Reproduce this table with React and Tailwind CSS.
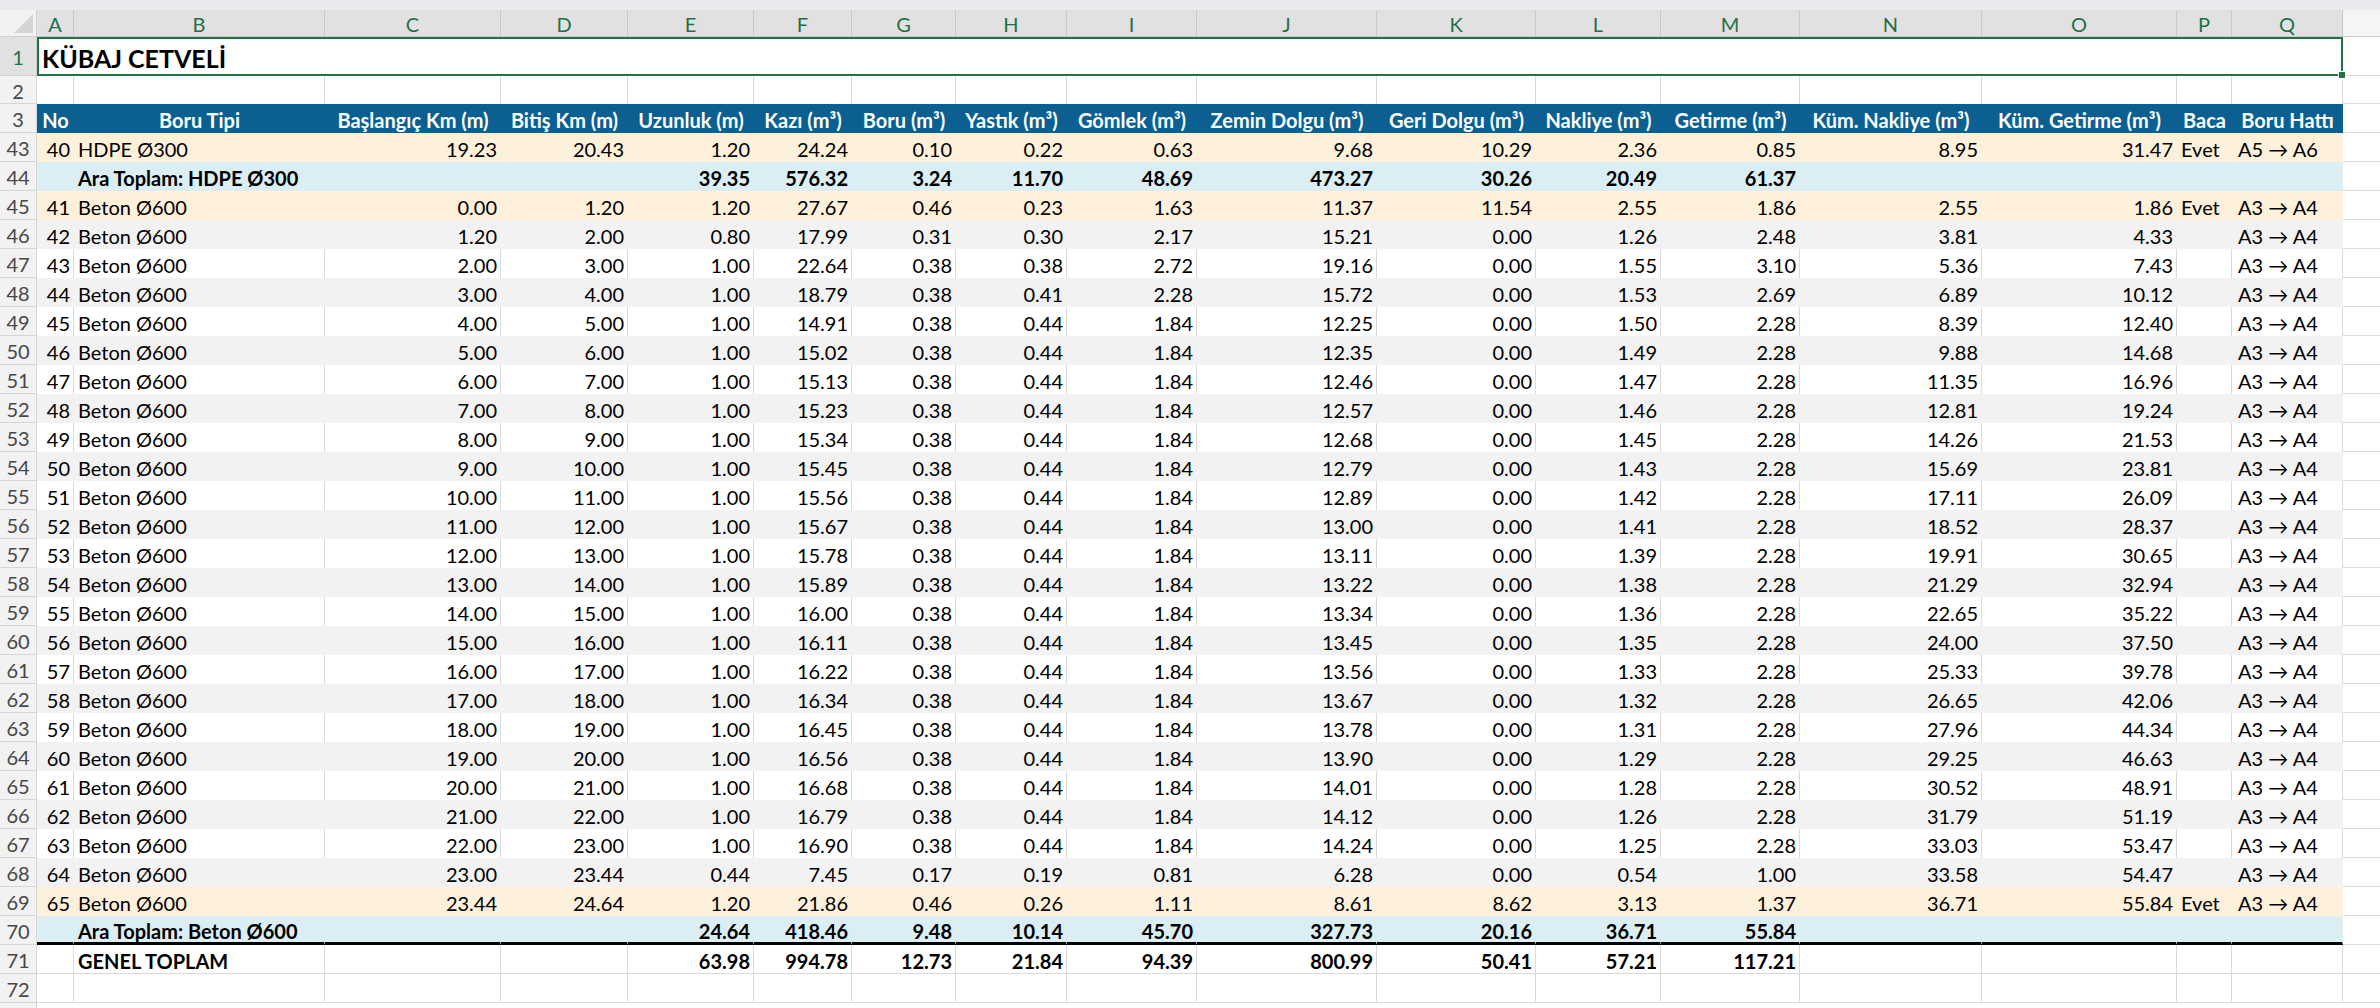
import React from "react";

const GRID =
  "grid grid-cols-[37px_37px_251px_176px_127px_126px_98px_104px_111px_130px_180px_159px_125px_139px_182px_195px_55px_111px_37px]";

const LETTERS = ["A", "B", "C", "D", "E", "F", "G", "H", "I", "J", "K", "L", "M", "N", "O", "P", "Q"];

const HEADERS = [
  "No",
  "Boru Tipi",
  "Başlangıç Km (m)",
  "Bitiş Km (m)",
  "Uzunluk (m)",
  "Kazı (m³)",
  "Boru (m³)",
  "Yastık (m³)",
  "Gömlek (m³)",
  "Zemin Dolgu (m³)",
  "Geri Dolgu (m³)",
  "Nakliye (m³)",
  "Getirme (m³)",
  "Küm. Nakliye (m³)",
  "Küm. Getirme (m³)",
  "Baca",
  "Boru Hattı",
];

const std = [
  ["45", "4.00", "5.00", "14.91", "12.25", "1.50", "8.39", "12.40"],
  ["46", "5.00", "6.00", "15.02", "12.35", "1.49", "9.88", "14.68"],
  ["47", "6.00", "7.00", "15.13", "12.46", "1.47", "11.35", "16.96"],
  ["48", "7.00", "8.00", "15.23", "12.57", "1.46", "12.81", "19.24"],
  ["49", "8.00", "9.00", "15.34", "12.68", "1.45", "14.26", "21.53"],
  ["50", "9.00", "10.00", "15.45", "12.79", "1.43", "15.69", "23.81"],
  ["51", "10.00", "11.00", "15.56", "12.89", "1.42", "17.11", "26.09"],
  ["52", "11.00", "12.00", "15.67", "13.00", "1.41", "18.52", "28.37"],
  ["53", "12.00", "13.00", "15.78", "13.11", "1.39", "19.91", "30.65"],
  ["54", "13.00", "14.00", "15.89", "13.22", "1.38", "21.29", "32.94"],
  ["55", "14.00", "15.00", "16.00", "13.34", "1.36", "22.65", "35.22"],
  ["56", "15.00", "16.00", "16.11", "13.45", "1.35", "24.00", "37.50"],
  ["57", "16.00", "17.00", "16.22", "13.56", "1.33", "25.33", "39.78"],
  ["58", "17.00", "18.00", "16.34", "13.67", "1.32", "26.65", "42.06"],
  ["59", "18.00", "19.00", "16.45", "13.78", "1.31", "27.96", "44.34"],
  ["60", "19.00", "20.00", "16.56", "13.90", "1.29", "29.25", "46.63"],
  ["61", "20.00", "21.00", "16.68", "14.01", "1.28", "30.52", "48.91"],
  ["62", "21.00", "22.00", "16.79", "14.12", "1.26", "31.79", "51.19"],
  ["63", "22.00", "23.00", "16.90", "14.24", "1.25", "33.03", "53.47"],
];

const ARROW = "A3 → A4";

const ROWS = [
  { n: 43, t: "o", c: ["40", "HDPE Ø300", "19.23", "20.43", "1.20", "24.24", "0.10", "0.22", "0.63", "9.68", "10.29", "2.36", "0.85", "8.95", "31.47", "Evet", "A5 → A6"] },
  { n: 44, t: "b", c: ["", "Ara Toplam: HDPE Ø300", "", "", "39.35", "576.32", "3.24", "11.70", "48.69", "473.27", "30.26", "20.49", "61.37", "", "", "", ""] },
  { n: 45, t: "o", c: ["41", "Beton Ø600", "0.00", "1.20", "1.20", "27.67", "0.46", "0.23", "1.63", "11.37", "11.54", "2.55", "1.86", "2.55", "1.86", "Evet", ARROW] },
  { n: 46, t: "g", c: ["42", "Beton Ø600", "1.20", "2.00", "0.80", "17.99", "0.31", "0.30", "2.17", "15.21", "0.00", "1.26", "2.48", "3.81", "4.33", "", ARROW] },
  { n: 47, t: "w", c: ["43", "Beton Ø600", "2.00", "3.00", "1.00", "22.64", "0.38", "0.38", "2.72", "19.16", "0.00", "1.55", "3.10", "5.36", "7.43", "", ARROW] },
  { n: 48, t: "g", c: ["44", "Beton Ø600", "3.00", "4.00", "1.00", "18.79", "0.38", "0.41", "2.28", "15.72", "0.00", "1.53", "2.69", "6.89", "10.12", "", ARROW] },
  ...std.map((s, i) => ({
    n: 49 + i,
    t: (49 + i) % 2 === 0 ? "g" : "w",
    c: [s[0], "Beton Ø600", s[1], s[2], "1.00", s[3], "0.38", "0.44", "1.84", s[4], "0.00", s[5], "2.28", s[6], s[7], "", ARROW],
  })),
  { n: 68, t: "g", c: ["64", "Beton Ø600", "23.00", "23.44", "0.44", "7.45", "0.17", "0.19", "0.81", "6.28", "0.00", "0.54", "1.00", "33.58", "54.47", "", ARROW] },
  { n: 69, t: "o", c: ["65", "Beton Ø600", "23.44", "24.64", "1.20", "21.86", "0.46", "0.26", "1.11", "8.61", "8.62", "3.13", "1.37", "36.71", "55.84", "Evet", ARROW] },
  { n: 70, t: "b", c: ["", "Ara Toplam: Beton Ø600", "", "", "24.64", "418.46", "9.48", "10.14", "45.70", "327.73", "20.16", "36.71", "55.84", "", "", "", ""] },
  { n: 71, t: "t", c: ["", "GENEL TOPLAM", "", "", "63.98", "994.78", "12.73", "21.84", "94.39", "800.99", "50.41", "57.21", "117.21", "", "", "", ""] },
  { n: 72, t: "e", c: ["", "", "", "", "", "", "", "", "", "", "", "", "", "", "", "", ""] },
];

function RowHeader({ n, selected }) {
  return (
    <div
      className={
        selected
          ? "flex items-center justify-center border-r border-b border-[#cfcfcf] bg-[#e1e1e1] text-[#1e7145] pt-[2px]"
          : "flex items-center justify-center border-r border-b border-[#d6d6d6] bg-[#f2f2f2] text-[#474747] pt-[2px]"
      }
    >
      {n}
    </div>
  );
}

function RestCell() {
  return <div className="bg-white border-b border-[#dadada]" />;
}

function DataRow({ row }) {
  const { n, t, c } = row;
  const bg =
    t === "o"
      ? "bg-[#fef1dc]"
      : t === "g"
      ? "bg-[#f2f2f2]"
      : t === "b"
      ? "bg-[#daeef3]"
      : "bg-white";
  const plain = t === "w" || t === "t" || t === "e";
  const border = plain ? "border-r border-[#dadada]" : "border-r border-transparent";
  const bottom =
    t === "t" || t === "e"
      ? "border-b border-b-[#dadada]"
      : t === "b" && n === 70
      ? "border-b-[3px] border-b-black"
      : "";
  const bold = t === "b" || t === "t" ? "font-bold" : "";
  return (
    <div className={`${GRID} h-[29px]`}>
      <RowHeader n={n} />
      {c.map((v, i) => {
        const left = i === 1 || i === 15 || i === 16;
        return (
          <div
            key={i}
            className={`${bg} ${border} ${bottom} ${bold} flex items-center pt-[3px] whitespace-nowrap overflow-visible ${
              left ? "justify-start pl-[4px]" : "justify-end pr-[3px]"
            } ${i === 16 ? "pl-[6px]" : ""}`}
          >
            {v}
          </div>
        );
      })}
      <RestCell />
    </div>
  );
}

export default function App() {
  return (
    <div className="w-[2380px] h-[1008px] overflow-hidden bg-white text-[20px] leading-none text-black font-['Lato',sans-serif]">
      {/* top strip */}
      <div className="h-[10px] bg-[#e8eaed]" />

      {/* column letters */}
      <div className={`${GRID} h-[27px]`}>
        <div className="relative bg-[#f2f2f2] border-r border-b border-[#cfcfcf]">
          <svg className="absolute left-[12px] top-[4px]" width="22" height="20" viewBox="0 0 22 20">
            <polygon points="21,0 21,19 2,19" fill="#d4d4d4" />
          </svg>
        </div>
        {LETTERS.map((l) => (
          <div
            key={l}
            className="flex items-center justify-center bg-[#e1e1e1] border-r border-b border-[#c8c8c8] text-[#1e7145] text-[20px] pt-[2px]"
          >
            {l}
          </div>
        ))}
        <div className="bg-[#f5f5f5] border-b border-[#d0d0d0]" />
      </div>

      {/* row 1 title */}
      <div className={`${GRID} h-[39px]`}>
        <RowHeader n={1} selected />
        <div className="relative col-span-17 flex items-center pl-[3px] pt-[4px] border-2 border-[#217346] bg-white">
          <span className="font-bold text-[25px] text-black">KÜBAJ CETVELİ</span>
          <div className="absolute -right-[5px] -bottom-[5px] w-[8px] h-[8px] bg-[#217346] border border-white" />
        </div>
        <RestCell />
      </div>

      {/* row 2 */}
      <div className={`${GRID} h-[28px]`}>
        <RowHeader n={2} />
        {LETTERS.map((l) => (
          <div key={l} className="bg-white border-r border-[#dadada]" />
        ))}
        <RestCell />
      </div>

      {/* row 3 header */}
      <div className={`${GRID} h-[29px]`}>
        <RowHeader n={3} />
        {HEADERS.map((h) => (
          <div
            key={h}
            className="flex items-center justify-center bg-[#0c5f91] text-white font-bold pt-[3px] whitespace-nowrap"
          >
            {h}
          </div>
        ))}
        <RestCell />
      </div>

      {ROWS.map((r) => (
        <DataRow key={r.n} row={r} />
      ))}
      <div className={`${GRID} h-[29px]`}>
        <div className="bg-[#f2f2f2] border-r border-[#d6d6d6]" />
      </div>
    </div>
  );
}
